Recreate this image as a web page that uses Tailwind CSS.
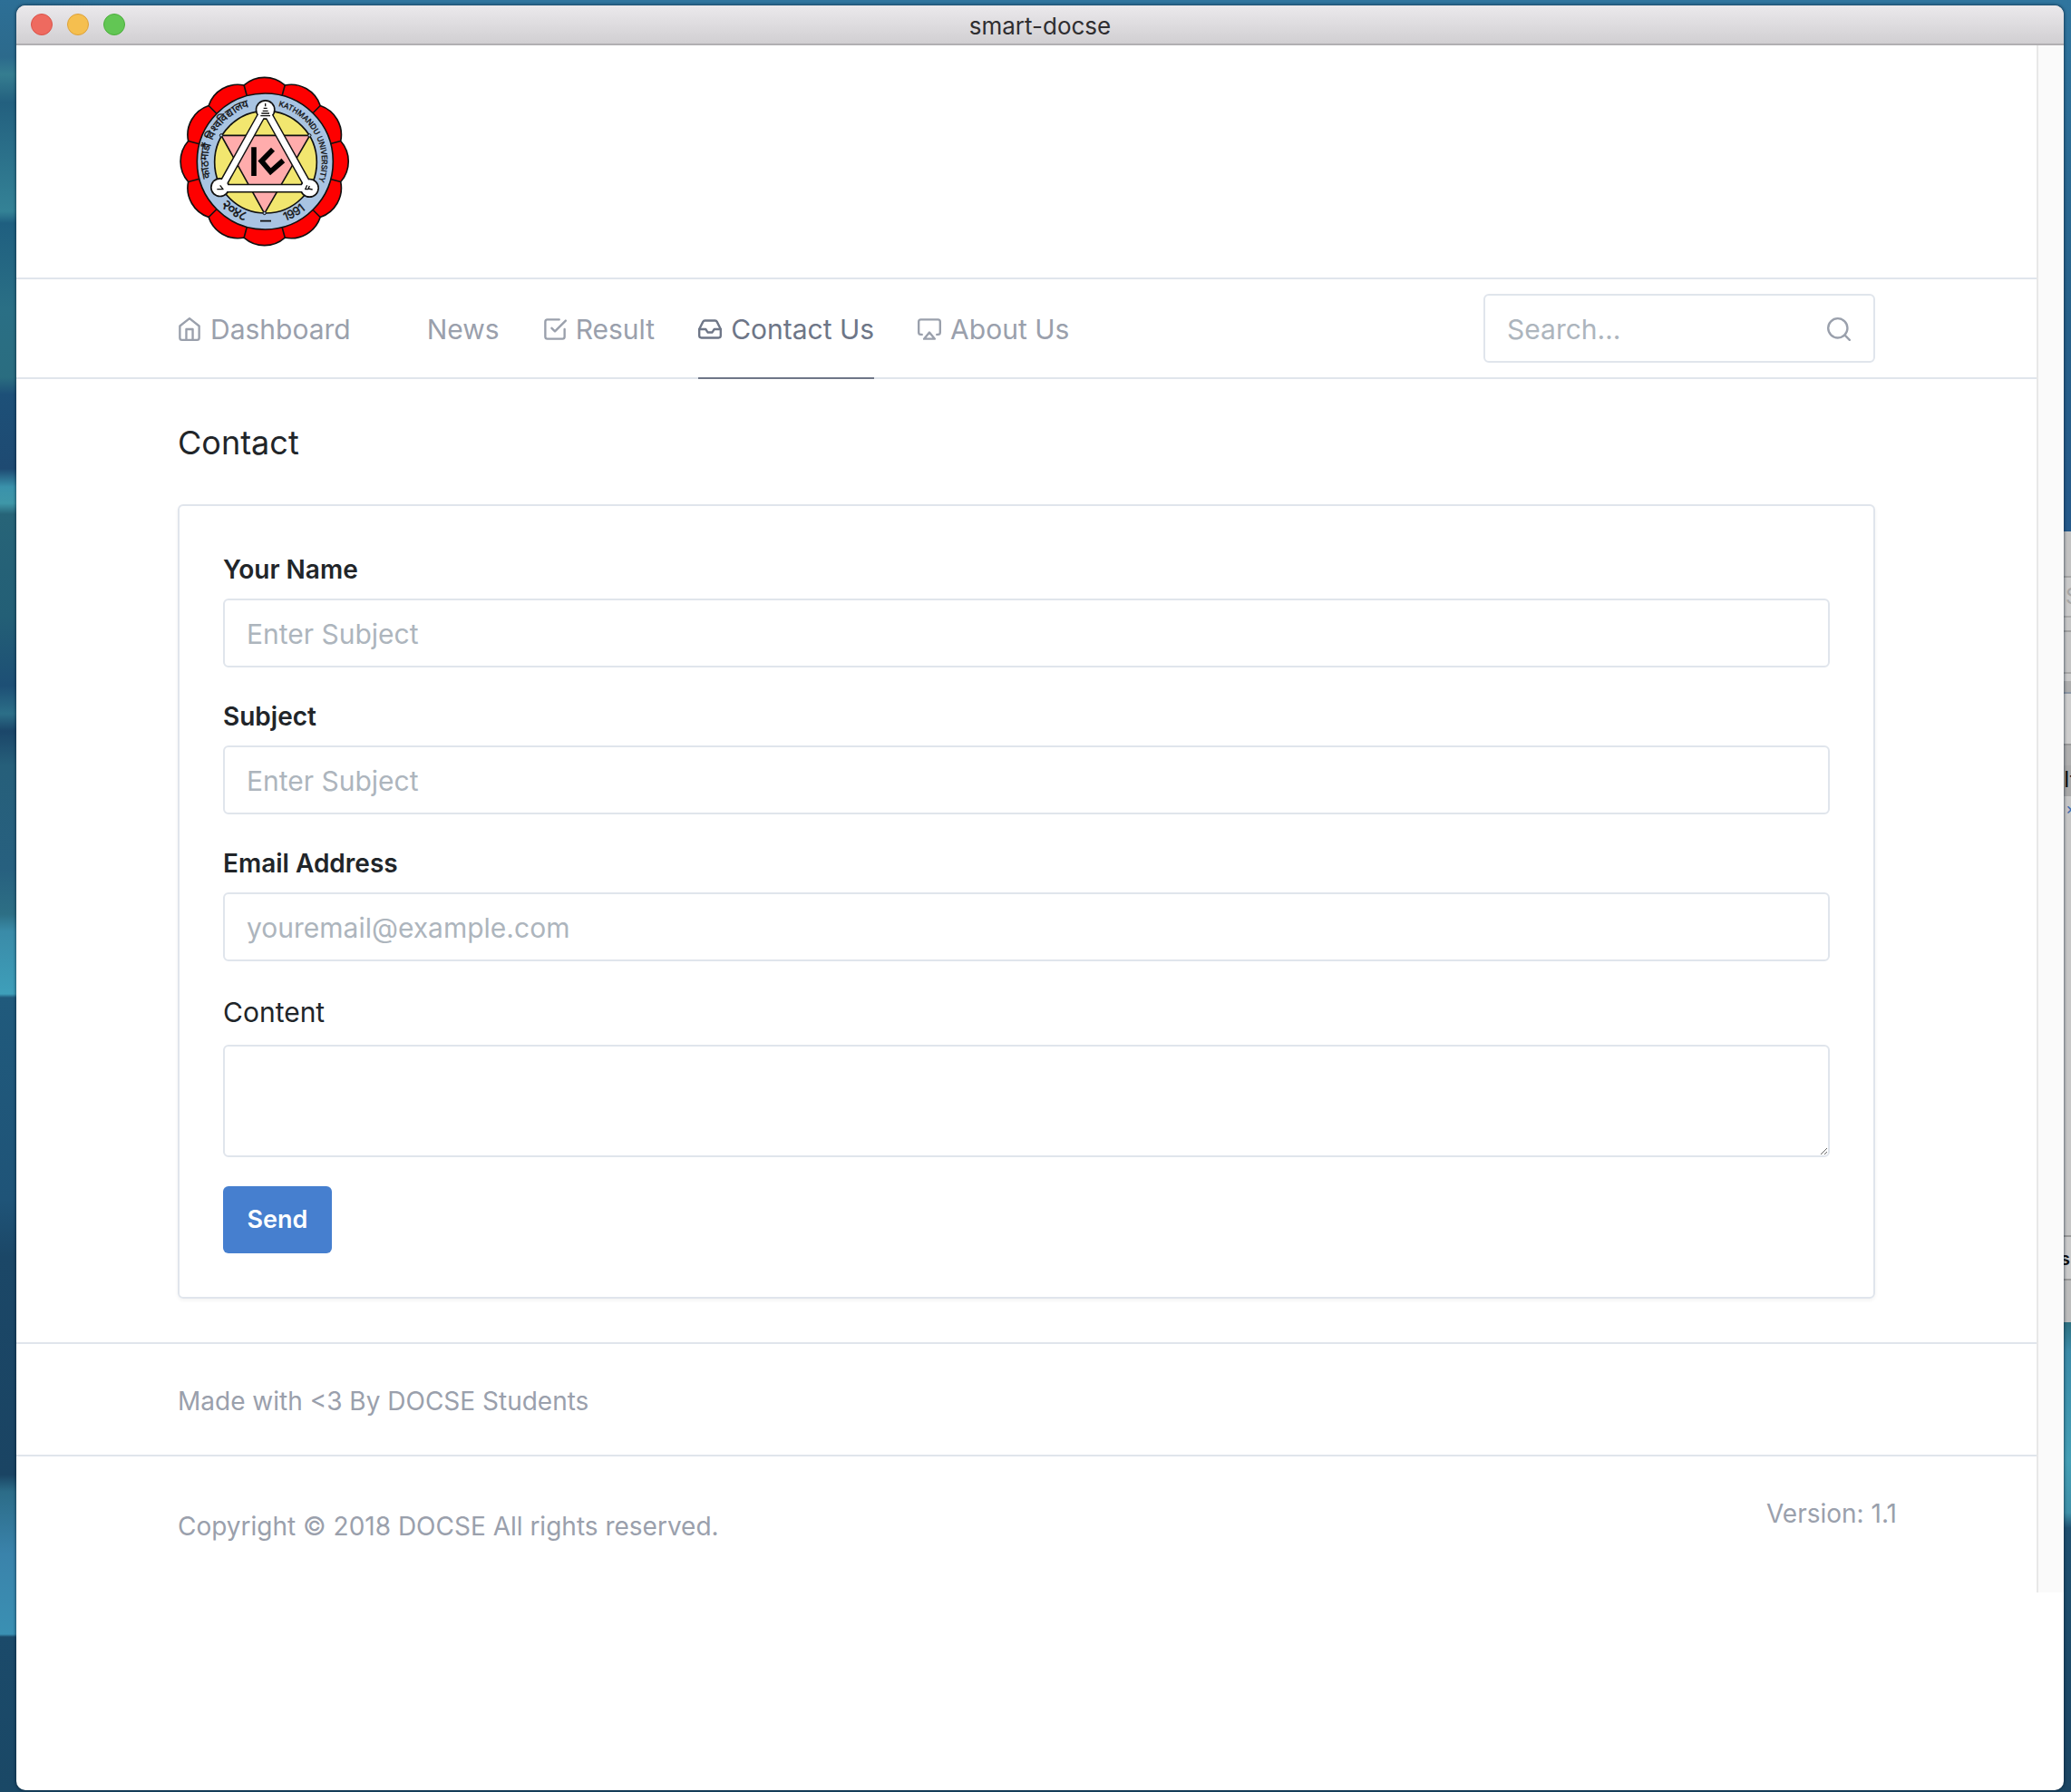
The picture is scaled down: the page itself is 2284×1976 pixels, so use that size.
<!DOCTYPE html>
<html lang="en">
<head>
<meta charset="utf-8">
<title>smart-docse</title>
<script src="https://cdn.jsdelivr.net/npm/@tailwindcss/browser@4"></script>
</head>
<body class="flex min-h-screen bg-[linear-gradient(180deg,#2d6f96_0px,#2c6a8c_63px,#357d90_82px,#23607f_113px,#348296_233px,#1f5f80_246px,#2a6f85_340px,#2a6d80_416px,#1d5078_435px,#1e4a72_517px,#3a92ab_537px,#3f97a8_555px,#276478_567px,#235f76_680px,#1d4f75_756px,#2c6f88_787px,#1b4669_806px,#265f7a_844px,#27607f_958px,#2d6f85_1008px,#3a8ba8_1027px,#3e9fba_1096px,#205a7c_1100px,#1f5478_1323px,#1b4767_1386px,#1a4463_1626px,#2c6c88_1645px,#3a83ab_1714px,#3a90b3_1802px,#1b4a6a_1805px,#1a4866_1976px)] bg-[#1a4866] pl-[18px] font-['Inter',sans-serif] text-[#212529]">
  <div class="flex flex-1 flex-col bg-[linear-gradient(90deg,#2d6f9600,#30759e_100px)] bg-[length:100%_20px] bg-no-repeat pt-[6px] pb-[2px]">
    <div class="relative z-10 flex flex-1 flex-col overflow-hidden rounded-[10px] bg-white shadow-[0_0_3px_1px_rgba(0,20,40,0.5)]">
      <header class="grid h-11 grid-cols-[1fr_auto_1fr] items-center border-b-2 border-[#b1afb2] bg-linear-to-b from-[#ebe9ec] to-[#d1cfd2] px-4">
        <div class="flex gap-4">
          <button aria-label="Close" class="size-6 rounded-full border border-[#d9534a] bg-[#ee6a5f]"></button>
          <button aria-label="Minimize" class="size-6 rounded-full border border-[#dca13b] bg-[#f5bf4f]"></button>
          <button aria-label="Zoom" class="size-6 rounded-full border border-[#4cae3c] bg-[#62c654]"></button>
        </div>
        <h1 class="pt-[3px] text-[26px] leading-8 text-[#2f2e30]">smart-docse</h1>
      </header>

      <div class="flex">
        <div class="min-w-0 flex-1">
          <div class="border-b-2 border-[#e0e5ec] px-6 py-8">
            <div class="mx-auto max-w-[1872px]">
              <a href="#" aria-label="Kathmandu University" class="block size-48">
                <svg viewBox="48 36 576 576" class="size-full">
                  <g stroke="#111" stroke-width="5">
                    <path fill="#fe0000" d="M402.600 71.900A102 102 0 0 1 519.600 139.400A102 102 0 0 1 587.100 256.400A102 102 0 0 1 587.100 391.600A102 102 0 0 1 519.600 508.600A102 102 0 0 1 402.600 576.100A102 102 0 0 1 267.400 576.100A102 102 0 0 1 150.400 508.600A102 102 0 0 1 82.900 391.600A102 102 0 0 1 82.900 256.400A102 102 0 0 1 150.400 139.400A102 102 0 0 1 267.400 71.900A102 102 0 0 1 402.600 71.900Z"/>
                    <path d="M402.600 71.900L267.400 576.100M519.600 139.400L150.400 508.600M587.100 256.400L82.900 391.600M587.100 391.600L82.900 256.400M519.600 508.600L150.400 139.400M402.600 576.100L267.400 71.900"/>
                    <circle cx="337" cy="324" r="225" fill="#a9c4e2"/>
                    <circle cx="339" cy="326" r="169" fill="#f2e66f"/>
                    <path fill="#ffacac" d="M192 238H485L335 496Z"/>
                  </g>
                  <g fill="none" stroke-linejoin="round">
                    <path stroke="#111" stroke-width="29" d="M337 150L190 413H484Z"/>
                    <g fill="#111"><circle cx="338" cy="153" r="33"/><circle cx="188" cy="410" r="32"/><circle cx="484" cy="412" r="32"/></g>
                    <path stroke="#fff" stroke-width="20" d="M337 150L190 413H484Z"/>
                    <g fill="#fff"><circle cx="338" cy="153" r="28"/><circle cx="188" cy="410" r="27"/><circle cx="484" cy="412" r="27"/></g>
                    <circle cx="192" cy="238" r="5" fill="#a9c4e2" stroke="#111" stroke-width="3"/><circle cx="484" cy="238" r="5" fill="#a9c4e2" stroke="#111" stroke-width="3"/><circle cx="335" cy="495" r="5" fill="#a9c4e2" stroke="#111" stroke-width="3"/>
                    <path stroke="#111" stroke-width="4" d="M338 132V142M332 148H344M329 157H347M325 165H351M322 173H354M178 416H198L188 403M476 403L470 416H480M484 405L480 414L494 417"/>
                    <path stroke="#000" stroke-width="17" stroke-linejoin="miter" d="M300 277V372M363 284L325 323L355 358L397 321"/>
                    <path stroke="#111" stroke-width="5" d="M321 521H357"/>
                  </g>
                  <defs>
                    <path id="ring-right" d="M337 136A188 188 0 0 1 525 324A188 188 0 0 1 337 512"/>
                    <path id="ring-left" d="M337 512A188 188 0 0 1 149 324A188 188 0 0 1 337 136"/>
                    <path id="ring-bottom" d="M129 324A208 208 0 0 0 545 324"/>
                  </defs>
                  <g fill="#111" stroke="#111" stroke-width="1" class="font-['Inter',sans-serif]">
                    <text font-size="25"><textPath href="#ring-right" startOffset="44">KATHMANDU UNIVERSITY</textPath></text>
                    <text font-size="36"><textPath href="#ring-left" startOffset="240">काठमाडौं विश्वविद्यालय</textPath></text>
                    <text font-size="48"><textPath href="#ring-bottom" startOffset="162">२०४८</textPath></text>
                    <text font-size="38"><textPath href="#ring-bottom" startOffset="394">1991</textPath></text>
                  </g>
                </svg>
              </a>
            </div>
          </div>

          <div class="border-b-2 border-[#e0e5ec] px-6">
            <div class="mx-auto flex h-27 max-w-[1872px] items-center justify-between">
              <nav class="flex h-full gap-12 text-[30px] leading-[45px] text-[#9aa0ac]">
                <a href="#" class="flex items-center gap-[10px] pt-[2px]">
                  <svg viewBox="1 1 22 22" class="size-[26px]" fill="none" stroke="currentColor" stroke-width="2" stroke-linecap="round" stroke-linejoin="round"><path d="M3 9l9-7 9 7v11a2 2 0 0 1-2 2H5a2 2 0 0 1-2-2z"/><path d="M9 22V12h6v10"/></svg>
                  Dashboard</a>
                <a href="#" class="flex items-center gap-[10px] pt-[2px]"><span class="w-[26px]"></span>News</a>
                <a href="#" class="flex items-center gap-[10px] pt-[2px]">
                  <svg viewBox="1 1 22 22" class="size-[26px]" fill="none" stroke="currentColor" stroke-width="2" stroke-linecap="round" stroke-linejoin="round"><path d="M9 11l3 3L22 4"/><path d="M21 12v7a2 2 0 0 1-2 2H5a2 2 0 0 1-2-2V5a2 2 0 0 1 2-2h11"/></svg>
                  Result</a>
                <a href="#" aria-current="page" class="-mb-[2px] flex items-center gap-[10px] border-b-2 border-[#6e7687] pt-[2px] text-[#6e7687]">
                  <svg viewBox="1 1 22 22" class="size-[26px]" fill="none" stroke="currentColor" stroke-width="2" stroke-linecap="round" stroke-linejoin="round"><path d="M22 12h-6l-2 3h-4l-2-3H2"/><path d="M5.450 5.110L2 12v6a2 2 0 0 0 2 2h16a2 2 0 0 0 2-2v-6l-3.450-6.890A2 2 0 0 0 16.760 4H7.240a2 2 0 0 0-1.790 1.110z"/></svg>
                  Contact Us</a>
                <a href="#" class="flex items-center gap-[10px] pt-[2px]">
                  <svg viewBox="1 1 22 22" class="size-[26px]" fill="none" stroke="currentColor" stroke-width="2" stroke-linecap="round" stroke-linejoin="round"><path d="M5 17H4a2 2 0 0 1-2-2V5a2 2 0 0 1 2-2h16a2 2 0 0 1 2 2v10a2 2 0 0 1-2 2h-1"/><path d="M12 15l5 6H7z"/></svg>
                  About Us</a>
              </nav>
              <form class="relative w-[432px]">
                <input type="search" aria-label="Search" placeholder="Search…" class="h-19 w-full rounded-md border-2 border-[#e0e5ec] pt-[2px] pr-16 pl-6 text-[30px] placeholder:text-[#adb5bd]">
                <svg viewBox="1 1 22 22" class="absolute top-[26px] right-[27px] size-[26px] text-[#9aa0ac]" fill="none" stroke="currentColor" stroke-width="2" stroke-linecap="round" stroke-linejoin="round"><circle cx="11" cy="11" r="9"/><path d="M22 22l-4.600-4.600"/></svg>
              </form>
            </div>
          </div>

          <main class="px-6 pt-[50px] pb-12">
            <div class="mx-auto max-w-[1872px]">
              <h2 class="mb-12 text-[36px] leading-10">Contact</h2>
              <form class="rounded-md border-2 border-[#e0e5ec] p-12 shadow-[0_2px_4px_rgba(0,0,0,0.05)]">
                <div class="mb-8">
                  <label for="name" class="mb-3 block pt-[2px] text-[28px] leading-10 font-semibold">Your Name</label>
                  <input id="name" type="text" placeholder="Enter Subject" class="block h-19 w-full rounded-md border-2 border-[#e0e5ec] px-6 pt-[2px] text-[30px] placeholder:text-[#adb5bd]">
                </div>
                <div class="mb-8">
                  <label for="subject" class="mb-3 block pt-[2px] text-[28px] leading-10 font-semibold">Subject</label>
                  <input id="subject" type="text" placeholder="Enter Subject" class="block h-19 w-full rounded-md border-2 border-[#e0e5ec] px-6 pt-[2px] text-[30px] placeholder:text-[#adb5bd]">
                </div>
                <div class="mb-8">
                  <label for="email" class="mb-3 block pt-[2px] text-[28px] leading-10 font-semibold">Email Address</label>
                  <input id="email" type="email" placeholder="youremail@example.com" class="block h-19 w-full rounded-md border-2 border-[#e0e5ec] px-6 pt-[2px] text-[30px] placeholder:text-[#adb5bd]">
                </div>
                <div class="mb-8">
                  <label for="content" class="mb-3 block text-[30px] leading-[48px]">Content</label>
                  <textarea id="content" class="block h-31 w-full resize-y rounded-md border-2 border-[#e0e5ec] px-6 py-3 text-[30px]"></textarea>
                </div>
                <button type="button" class="block h-[74px] min-w-[120px] rounded-md bg-[#467fcf] px-6 text-[27px] font-semibold text-white">Send</button>
              </form>
            </div>
          </main>

          <footer class="text-[28px] leading-[42px] text-[#9aa0ac]">
            <div class="border-y-2 border-[#e0e5ec] px-6 pt-[42px] pb-[38px]">
              <p class="mx-auto max-w-[1872px]">Made with &lt;3 By DOCSE Students</p>
            </div>
            <div class="px-6 pt-[42px] pb-[38px]">
              <div class="mx-auto flex max-w-[1872px] justify-between">
                <p class="py-[14px]">Copyright © 2018 DOCSE All rights reserved.</p>
                <p class="-mr-6">Version: 1.1</p>
              </div>
            </div>
          </footer>
        </div>
        <div class="w-[30px] border-l-2 border-[#e8e8e8] bg-[#fafafa]"></div>
      </div>
    </div>
  </div>

  <aside class="flex w-2 flex-col overflow-hidden bg-[linear-gradient(180deg,#30759e_0px,#27618a_350px,#25598a_585px,#2d7080_1458px,#3c8ba8_1490px,#45a0b6_1610px,#3f90a8_1668px,#1f5070_1685px,#1b4563_1976px)] pt-[586px]">
    <div class="h-[51px] border-b-2 border-[#a5a5a5] bg-[#c2c2c2]"></div>
    <div class="h-[44px] border-b-2 border-[#aaa] bg-[#c9c9c9] pl-[2px] text-[24px] leading-[42px] text-[#a5a5a5]">S</div>
    <div class="h-[16px] border-b-2 border-[#a2a2a2] bg-[#c6c6c6]"></div>
    <div class="h-[46px] border-b-2 border-[#a8a8a8] bg-[#c4c4c4]"></div>
    <div class="h-[8px] bg-[#c9c9c9]"></div>
    <div class="h-[14px] border-b-2 border-[#8c97a5] bg-[#adadad]"></div>
    <div class="h-[57px] border-b-2 border-[#999] bg-[#cdcdcd]"></div>
    <div class="h-[22px] bg-[#aeaeae]"></div>
    <div class="h-[34px] bg-[#a8a8a8] text-[24px] leading-[32px] text-[#111]">It</div>
    <div class="h-[486px] border-b-2 border-[#999] bg-[#c6c6c6] pl-[2px] text-[18px] leading-[28px] text-[#3e6ab0]">×</div>
    <div class="h-[48px] border-b-2 border-[#999] bg-[#cacaca] text-[20px] leading-[48px] font-semibold text-[#111]"><span class="-ml-[4px]">s</span></div>
    <div class="h-[46px] bg-[#bcbcbc]"></div>
  </aside>
</body>
</html>
